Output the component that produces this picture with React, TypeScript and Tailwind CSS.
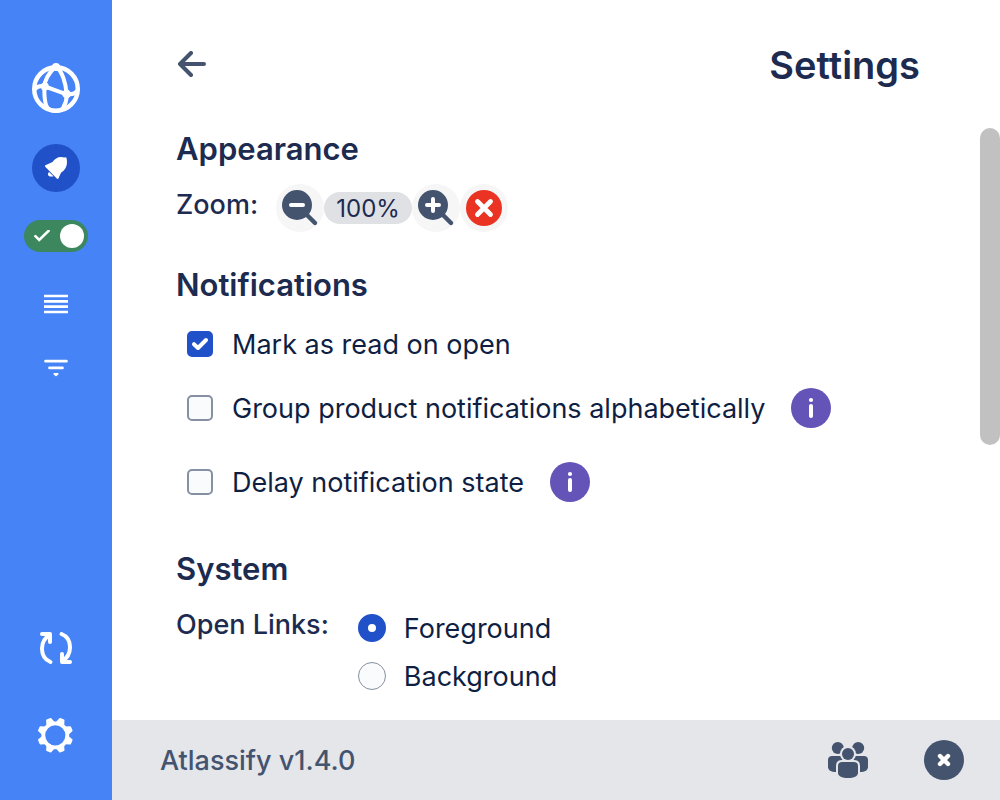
import { useState, type ReactNode } from "react";

const GEAR_TEETH = [22.5, 67.5, 112.5, 157.5, 202.5, 247.5, 292.5, 337.5];

function LogoIcon() {
  return (
    <svg className="h-[50px] w-12" viewBox="0 0 48 50" fill="none" stroke="white" strokeWidth="4" strokeLinecap="round" aria-hidden="true">
      <circle cx="24" cy="26" r="21.8" strokeWidth="4.4" />
      <path d="M23 4C17 10 12.5 17 12.4 24C12.2 32 12.6 39 14.5 43C17 49 28 49.5 31 45C33.5 41 35 36 34.6 31C34 20 30 9 25 4" />
      <path d="M2.5 26.5C5 23.5 9 22.3 13 23.5C20 26 28 29.5 34.5 31C39 31.8 43 31 45.5 27.5" />
      <circle cx="24" cy="4" r="4" fill="white" stroke="none" />
      <circle cx="12.8" cy="23.6" r="4" fill="white" stroke="none" />
      <circle cx="34.6" cy="31" r="4.4" fill="white" stroke="none" />
    </svg>
  );
}

function BellIcon() {
  return (
    <svg className="size-12" viewBox="0 0 48 48" fill="white" aria-hidden="true">
      <path d="M13.4 21.3L20.5 18C22.5 15 25.5 13 29 13L32.5 13.6L34.2 13.2L34.8 15.6C35.4 19.5 34.8 23.5 31.8 26.4L29 28.8L26.4 34.4C26 35.2 25.4 35.2 24.8 34.6L13.2 22.7C12.8 22.2 12.9 21.5 13.4 21.3Z" />
      <path d="M17 28L21.5 32.2C20 33 16 32.6 16 30.4C16 29.4 16.4 28.6 17 28Z" />
    </svg>
  );
}

function ListIcon() {
  return (
    <svg className="h-5 w-6" viewBox="0 0 24 20" stroke="white" strokeWidth="2.7" aria-hidden="true">
      <path d="M0 2H24M0 7.3H24M0 12.7H24M0 18H24" />
    </svg>
  );
}

function FilterIcon() {
  return (
    <svg className="h-5 w-6" viewBox="0 0 24 20" stroke="white" strokeWidth="2.7" strokeLinecap="round" aria-hidden="true">
      <path d="M1.5 3.2H22.5M5.5 9.9H18.5" />
      <path d="M10.2 15.8H13.8L12 17.4Z" fill="white" strokeWidth="1.6" strokeLinejoin="round" />
    </svg>
  );
}

function RefreshIcon() {
  return (
    <svg className="size-8" viewBox="0 0 32 32" fill="none" stroke="white" strokeWidth="4" strokeLinecap="round" strokeLinejoin="round" aria-hidden="true">
      <path d="M10.4 30C-0.6 25.5 -0.8 9 9.8 3M2 2H10V10" />
      <path d="M21.6 2C32.6 6.5 32.8 23 22.2 29M30 30H22V22" />
    </svg>
  );
}

function GearIcon() {
  return (
    <svg className="size-9" viewBox="-17.3 -17.3 36 36" stroke="white" fill="none" aria-hidden="true">
      <circle r="12" strokeWidth="3.8" />
      {GEAR_TEETH.map((angle) => (
        <path key={angle} d="M-3.6 -12.5L-2 -17H2L3.6 -12.5Z" fill="white" strokeWidth="1.6" strokeLinejoin="round" transform={`rotate(${angle})`} />
      ))}
    </svg>
  );
}

function ArrowLeftIcon() {
  return (
    <svg className="h-[26px] w-7" viewBox="0 0 28 26" fill="none" stroke="#44546f" strokeWidth="4" strokeLinecap="round" strokeLinejoin="round" aria-hidden="true">
      <path d="M13 2L2 13L13 24M2 13H26" />
    </svg>
  );
}

function MagnifierIcon({ plus = false }: { plus?: boolean }) {
  return (
    <svg className="size-12" viewBox="0 0 48 48" fill="none" strokeLinecap="round" aria-hidden="true">
      <path d="M30 30L39 39" stroke="#44546f" strokeWidth="4.4" />
      <circle cx="21" cy="21" r="15" fill="#44546f" />
      <path d={plus ? "M15 21H27M21 15V27" : "M15 21H27"} stroke="white" strokeWidth="4" />
    </svg>
  );
}

function ResetIcon() {
  return (
    <svg className="size-12" viewBox="0 0 48 48" fill="none" aria-hidden="true">
      <circle cx="24" cy="24" r="18" fill="#ea3323" />
      <path d="M17.5 17.5L30.5 30.5M30.5 17.5L17.5 30.5" stroke="white" strokeWidth="4.8" strokeLinecap="round" />
    </svg>
  );
}

function InfoIcon() {
  return (
    <svg className="size-10" viewBox="0 0 40 40" aria-hidden="true">
      <circle cx="20" cy="20" r="20" fill="#6554b8" />
      <circle cx="20" cy="12" r="2.1" fill="white" />
      <path d="M20 18V28" stroke="white" strokeWidth="4" strokeLinecap="round" />
    </svg>
  );
}

function PeopleIcon() {
  return (
    <svg className="h-[38px] w-10" viewBox="0 0 40 38" fill="#44546f" aria-hidden="true">
      <circle cx="9.8" cy="7" r="6" />
      <circle cx="30.2" cy="7" r="6" />
      <path d="M4 15H36C38.5 15 40 16.5 40 19V26C40 29 37 31 32 31H8C3 31 0 29 0 26V19C0 16.5 1.5 15 4 15Z" />
      <path d="M14 20H26C29.5 20 31 22 31 25V32C31 36 26 38 20 38S9 36 9 32V25C9 22 10.5 20 14 20Z" fill="#e5e6ea" stroke="#e5e6ea" strokeWidth="2" />
      <circle cx="20" cy="13" r="8" fill="#e5e6ea" />
      <circle cx="20" cy="13" r="6" />
      <path d="M14 21H26C28.5 21 30 22.5 30 25V32C30 35 26 37 20 37S10 35 10 32V25C10 22.5 11.5 21 14 21Z" />
    </svg>
  );
}

function QuitIcon() {
  return (
    <svg className="size-10" viewBox="0 0 40 40" aria-hidden="true">
      <circle cx="20" cy="20" r="20" fill="#44546f" />
      <path d="M16 16L24 24M24 16L16 24" stroke="white" strokeWidth="4.4" strokeLinecap="round" />
    </svg>
  );
}

function SectionHeading({ children }: { children: ReactNode }) {
  return <h2 className="text-[31px] leading-[42px] font-semibold text-[#1c2b4f]">{children}</h2>;
}

function CheckboxRow({ id, label, initial = false, info = false }: { id: string; label: string; initial?: boolean; info?: boolean }) {
  const [checked, setChecked] = useState(initial);
  return (
    <div className="flex h-10 items-center pl-[11px]">
      <span className="grid place-items-center">
        <input
          id={id}
          type="checkbox"
          checked={checked}
          onChange={(e) => setChecked(e.target.checked)}
          className="col-start-1 row-start-1 size-[26px] appearance-none rounded-[5px] border-2 border-[#8590a2] bg-[#fafbfc] checked:border-[#2151c8] checked:bg-[#2151c8]"
        />
        {checked && (
          <svg className="pointer-events-none col-start-1 row-start-1 size-[26px]" viewBox="0 0 26 26" fill="none" stroke="white" strokeWidth="4" strokeLinecap="round" strokeLinejoin="round" aria-hidden="true">
            <path d="M7 13.2L11 17L19 9" />
          </svg>
        )}
      </span>
      <label htmlFor={id} className="pt-0.5 pl-[19px] text-[27px] text-[#0f1f44]">
        {label}
      </label>
      {info && (
        <button type="button" aria-label={`About: ${label}`} className="ml-[26px]">
          <InfoIcon />
        </button>
      )}
    </div>
  );
}

function RadioRow({ value, selected, onSelect }: { value: string; selected: boolean; onSelect: (value: string) => void }) {
  return (
    <label className="flex h-12 items-center gap-[18px] text-[27px] text-[#0f1f44]">
      <input
        type="radio"
        name="open-links"
        checked={selected}
        onChange={() => onSelect(value)}
        className="size-7 appearance-none rounded-full border border-[#8590a2] bg-[#fafbfc] checked:border-10 checked:border-[#2151c8] checked:bg-white"
      />
      <span className="pt-0.5">{value}</span>
    </label>
  );
}

export default function App() {
  const [links, setLinks] = useState("Foreground");
  const [zoom, setZoom] = useState(100);
  const [online, setOnline] = useState(true);

  return (
    <div className="flex h-screen bg-white font-['Inter',sans-serif]">
      <nav className="flex w-28 shrink-0 flex-col items-center justify-between bg-[#4583f7] pt-[63px] pb-[46px]">
        <div className="flex flex-col items-center">
          <a href="#home" aria-label="Home">
            <LogoIcon />
          </a>
          <button type="button" aria-label="Notifications" className="mt-[31px] rounded-full bg-[#2151c8]">
            <BellIcon />
          </button>
          <button
            type="button"
            role="switch"
            aria-checked={online}
            aria-label="Notifications enabled"
            onClick={() => setOnline(!online)}
            className="mt-7 flex h-8 w-16 items-center justify-between rounded-full bg-[#3c875d] pr-1 pl-2.5"
          >
            <svg className="h-3 w-4" viewBox="0 0 16 12" fill="none" stroke="white" strokeWidth="2.6" strokeLinecap="round" aria-hidden="true">
              <path d="M1.4 6.2L5.2 10L14.6 0.8" />
            </svg>
            <span className="size-6 rounded-full bg-white" />
          </button>
          <button type="button" aria-label="List view" className="mt-[42px]">
            <ListIcon />
          </button>
          <button type="button" aria-label="Filters" className="mt-11">
            <FilterIcon />
          </button>
        </div>
        <div className="flex flex-col items-center gap-[54px]">
          <button type="button" aria-label="Refresh">
            <RefreshIcon />
          </button>
          <button type="button" aria-label="Settings">
            <GearIcon />
          </button>
        </div>
      </nav>

      <div className="flex min-w-0 flex-1 flex-col">
        <header className="flex h-32 shrink-0 items-center justify-between pr-20 pl-[66px]">
          <button type="button" aria-label="Go back">
            <ArrowLeftIcon />
          </button>
          <h1 className="pt-0.5 text-[38px] leading-12 font-semibold text-[#1c2b4f]">Settings</h1>
        </header>

        <main className="flex min-h-0 flex-1">
          <div className="min-w-0 flex-1 overflow-hidden pl-16">
            <section>
              <SectionHeading>Appearance</SectionHeading>
              <div className="mt-3.5 flex h-12 items-start gap-[18px]">
                <span className="text-[27px] leading-[42px] font-medium text-[#1c2b4f]">Zoom:</span>
                <div className="flex items-center">
                  <button type="button" aria-label="Zoom out" onClick={() => setZoom(zoom - 10)} className="rounded-full bg-[#f6f6f6]">
                    <MagnifierIcon />
                  </button>
                  <output className="flex h-8 w-22 items-center justify-center rounded-full bg-[#dfe1e5] pt-0.5 text-2xl text-[#1c2b4f]">{zoom}%</output>
                  <button type="button" aria-label="Zoom in" onClick={() => setZoom(zoom + 10)} className="rounded-full bg-[#f6f6f6]">
                    <MagnifierIcon plus />
                  </button>
                  <button type="button" aria-label="Reset zoom" onClick={() => setZoom(100)} className="rounded-full bg-[#f6f6f6]">
                    <ResetIcon />
                  </button>
                </div>
              </div>
            </section>

            <section className="mt-8">
              <SectionHeading>Notifications</SectionHeading>
              <div className="mt-[18px] flex flex-col">
                <CheckboxRow id="mark-read" label="Mark as read on open" initial />
                <div className="mt-6 flex flex-col gap-[34px]">
                  <CheckboxRow id="group-alpha" label="Group product notifications alphabetically" info />
                  <CheckboxRow id="delay-state" label="Delay notification state" info />
                </div>
              </div>
            </section>

            <section className="mt-[46px]">
              <SectionHeading>System</SectionHeading>
              <fieldset className="mt-3.5 flex gap-[29px]" aria-labelledby="open-links-label">
                <span id="open-links-label" className="text-[27px] leading-[42px] font-medium text-[#1c2b4f]">
                  Open Links:
                </span>
                <div>
                  {["Foreground", "Background"].map((value) => (
                    <RadioRow key={value} value={value} selected={links === value} onSelect={setLinks} />
                  ))}
                </div>
              </fieldset>
            </section>
          </div>
          <div className="w-5 shrink-0" aria-hidden="true">
            <div className="h-[317px] rounded-full bg-[#c1c1c1]" />
          </div>
        </main>

        <footer className="flex h-20 shrink-0 items-center justify-between bg-[#e5e6ea] pr-9 pl-12">
          <span className="pt-0.5 text-[27px] font-medium text-[#44546f]">Atlassify v1.4.0</span>
          <div className="flex items-center gap-14">
            <button type="button" aria-label="Accounts">
              <PeopleIcon />
            </button>
            <button type="button" aria-label="Quit">
              <QuitIcon />
            </button>
          </div>
        </footer>
      </div>
    </div>
  );
}
